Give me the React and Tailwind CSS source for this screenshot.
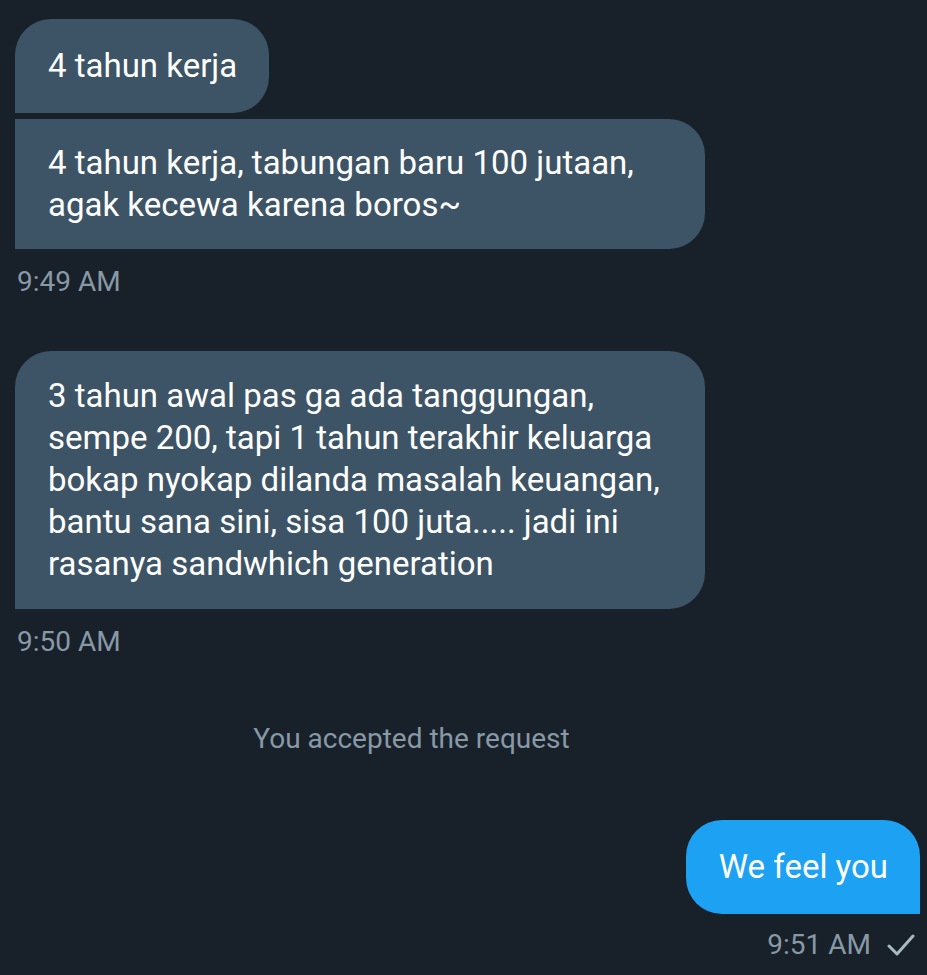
const font = { fontFamily: "Roboto, 'Noto Sans', sans-serif" };

const Received = ({ children, className = "" }) => (
  <div
    className={`bg-[#3d5466] text-white text-[33px] leading-[42px] pl-[33px] pr-[32px] ${className}`}
  >
    {children}
  </div>
);

const Time = ({ children, className = "" }) => (
  <div className={`text-[#8899a6] text-[28px] leading-[32px] ${className}`}>{children}</div>
);

export default function App() {
  return (
    <div className="min-h-[975px] w-[927px] bg-[#18202a] overflow-hidden" style={font}>
      <div className="flex flex-col pt-[19px]">
        <div className="pl-[15px] flex flex-col items-start gap-[6px]">
          <Received className="py-[26px] rounded-t-[36px] rounded-br-[36px]">4 tahun kerja</Received>
          <Received className="w-[690px] py-[23px] rounded-r-[36px]">
            4 tahun kerja, tabungan baru 100 jutaan,
            <br />
            agak kecewa karena boros~
          </Received>
        </div>
        <Time className="pl-[17px] mt-[17px]">9:49 AM</Time>

        <div className="pl-[15px] mt-[53px]">
          <Received className="w-[690px] py-[24px] rounded-t-[36px] rounded-br-[36px]">
            3 tahun awal pas ga ada tanggungan,
            <br />
            sempe 200, tapi 1 tahun terakhir keluarga
            <br />
            bokap nyokap dilanda masalah keuangan,
            <br />
            bantu sana sini, sisa 100 juta..... jadi ini
            <br />
            rasanya sandwhich generation
          </Received>
        </div>
        <Time className="pl-[17px] mt-[17px]">9:50 AM</Time>

        <div className="flex justify-center pr-[104px] mt-[65px] text-[#8899a6] text-[28px] leading-[32px]">
          You accepted the request
        </div>

        <div className="flex justify-end pr-[7px] mt-[65px]">
          <div className="bg-[#1da1f2] text-white text-[33px] leading-[42px] pl-[33px] pr-[32px] py-[26px] rounded-t-[36px] rounded-bl-[36px]">
            We feel you
          </div>
        </div>
        <div className="flex justify-end items-center gap-[16px] pr-[12px] mt-[15px]">
          <Time>9:51 AM</Time>
          <svg width="28" height="24" viewBox="0 0 28 24" fill="none">
            <path d="M2 13 L10 21 L26 3" stroke="#aab8c2" strokeWidth="3" strokeLinecap="round" strokeLinejoin="round" />
          </svg>
        </div>
      </div>
    </div>
  );
}
